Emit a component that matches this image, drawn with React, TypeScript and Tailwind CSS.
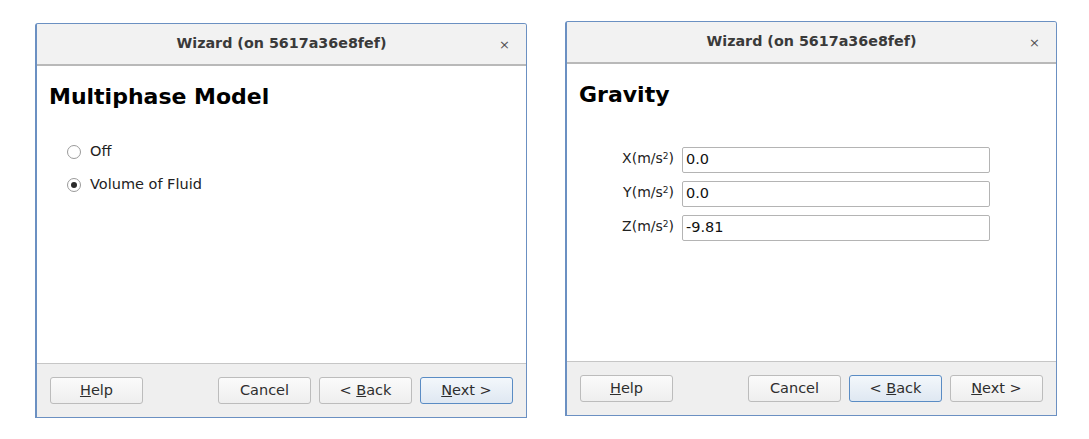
import React from "react";

const font = { fontFamily: '"DejaVu Sans", "Liberation Sans", sans-serif' };

const Button = ({ children, focused }: { children: React.ReactNode; focused?: boolean }) => (
	<div
		className={
			"w-[93px] h-[27px] rounded-[3px] border flex items-center justify-center text-[14.5px] text-[#2e2e2e] " +
			(focused
				? "border-[#5a8cc4] bg-gradient-to-b from-[#f3f7fb] to-[#dfe8f2]"
				: "border-[#bcbcbc] bg-gradient-to-b from-[#fbfbfb] to-[#eeeeee]")
		}
	>
		{children}
	</div>
);

const Footer = ({ focus }: { focus: "back" | "next" }) => (
	<div className="h-[54px] bg-[#efefef] border-t border-[#c6c6c6] flex items-start pt-[13px] px-[13px]">
		<Button>
			<span>
				<u>H</u>elp
			</span>
		</Button>
		<div className="flex-1" />
		<div className="flex gap-[8px]">
			<Button>Cancel</Button>
			<Button focused={focus === "back"}>
				<span>
					&lt; <u>B</u>ack
				</span>
			</Button>
			<Button focused={focus === "next"}>
				<span>
					<u>N</u>ext &gt;
				</span>
			</Button>
		</div>
	</div>
);

const Window = ({ children, focus }: { children: React.ReactNode; focus: "back" | "next" }) => (
	<div className="w-[492px] h-[395px] flex flex-col border border-[#6b90c2] border-l-2 rounded-tr-[3px] rounded-tl-[3px] overflow-hidden">
		<div className="h-[42px] bg-[#f2f2f2] border-b-2 border-[#b9b9b9] relative flex items-center justify-center">
			<span className="text-[14.3px] font-bold text-[#3a3a3a]">Wizard (on 5617a36e8fef)</span>
			<span className="absolute right-[16px] top-[11px] text-[13px] text-[#555]">×</span>
		</div>
		<div className="flex-1 bg-white px-[12px] pt-[17px]">{children}</div>
		<Footer focus={focus} />
	</div>
);

const Radio = ({ label, checked }: { label: string; checked?: boolean }) => (
	<div className="flex items-center gap-[9px] h-[20px]">
		<div className="w-[14px] h-[14px] rounded-full border border-[#9a9a9a] bg-white flex items-center justify-center">
			{checked && <div className="w-[6px] h-[6px] rounded-full bg-[#2a2a2a]" />}
		</div>
		<span className="text-[14.5px] text-[#222]">{label}</span>
	</div>
);

const Field = ({ axis, value }: { axis: string; value: string }) => (
	<div className="flex items-center">
		<div className="w-[73px] text-right text-[14px] text-[#222] pr-[8px] -mt-[3px]">
			{axis}(m/s<sup className="text-[9px]">2</sup>)
		</div>
		<div className="w-[308px] h-[26px] border border-[#b4b4b4] rounded-[2px] bg-white flex items-center px-[3px] text-[14.5px] text-[#111]">
			{value}
		</div>
	</div>
);

export default function App() {
	return (
		<div className="w-[1089px] h-[439px] bg-white flex items-start pl-[35px] pt-[21px] gap-[38px]" style={font}>
			<div className="mt-[2px]">
				<Window focus="next">
					<h1 className="text-[22px] font-bold text-black leading-[28px]">Multiphase Model</h1>
					<div className="flex flex-col gap-[13px] mt-[31px] ml-[18px]">
						<Radio label="Off" />
						<Radio label="Volume of Fluid" checked />
					</div>
				</Window>
			</div>
			<Window focus="back">
				<h1 className="text-[22px] font-bold text-black leading-[28px]">Gravity</h1>
				<div className="flex flex-col gap-[8px] mt-[38px] ml-[30px]">
					<Field axis="X" value="0.0" />
					<Field axis="Y" value="0.0" />
					<Field axis="Z" value="-9.81" />
				</div>
			</Window>
		</div>
	);
}
